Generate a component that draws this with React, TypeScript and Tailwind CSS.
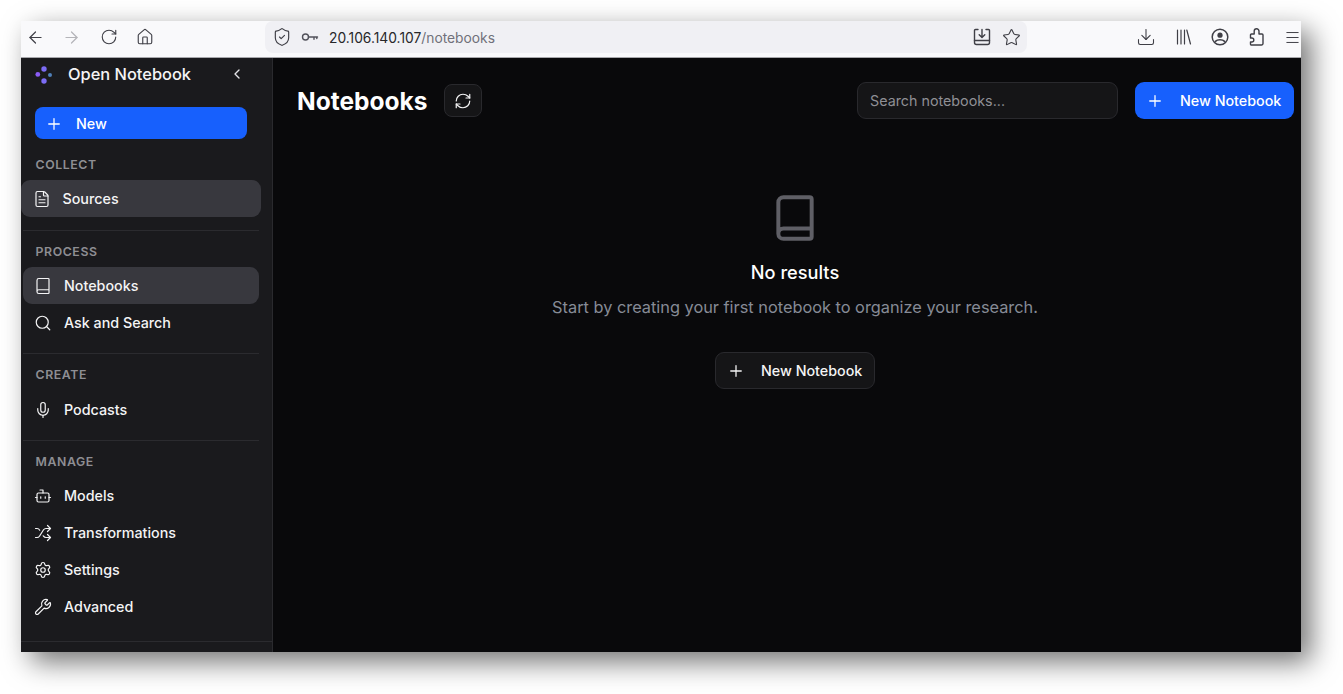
import React from 'react';
import {
  ArrowLeft,
  ArrowRight,
  Book,
  Bot,
  ChevronLeft,
  Download,
  FileText,
  House,
  Menu,
  Mic,
  Plus,
  RefreshCw,
  RotateCw,
  Search,
  Settings,
  ShieldCheck,
  Shuffle,
  Star,
  Wrench,
} from 'lucide-react';

const font = { fontFamily: 'Inter, sans-serif' };

const KeyIcon = () => (
  <svg width="18" height="18" viewBox="0 0 18 18" fill="none" stroke="#52525b" strokeWidth="1.4" strokeLinecap="round">
    <circle cx="4.5" cy="9" r="3" />
    <path d="M7.5 9h9M13 9v2.2M15.8 9v1.6" />
  </svg>
);

const SavePageIcon = () => (
  <svg width="18" height="18" viewBox="0 0 18 18" fill="none" stroke="#3f3f46" strokeWidth="1.4" strokeLinecap="round" strokeLinejoin="round">
    <path d="M5 1.5H2.5a1 1 0 0 0-1 1v12a2 2 0 0 0 2 2h11a2 2 0 0 0 2-2v-12a1 1 0 0 0-1-1H13" />
    <path d="M1.5 12.5h15M9 1.5v7.5M6.2 6.8 9 9.6l2.8-2.8" />
  </svg>
);

const LibraryIcon = () => (
  <svg width="16" height="16" viewBox="0 0 16 16" fill="none" stroke="#3f3f46" strokeWidth="1.2" strokeLinecap="round">
    <path d="M1.5 1v14M5 1v14M8.5 1v14M10.8 1l3.7 14" />
  </svg>
);

const AccountIcon = () => (
  <svg width="18" height="18" viewBox="0 0 18 18" fill="none" stroke="#3f3f46" strokeWidth="1.5" strokeLinecap="round">
    <circle cx="9" cy="9" r="7.8" />
    <circle cx="9" cy="7.2" r="2.6" fill="#3f3f46" stroke="none" />
    <path d="M4.4 13.4c1.2-1.3 2.8-1.7 4.6-1.7s3.4.4 4.6 1.7" strokeWidth="1.6" />
  </svg>
);

const ExtensionIcon = () => (
  <svg width="16" height="18" viewBox="0 0 16 18" fill="none" stroke="#3f3f46" strokeWidth="1.4" strokeLinejoin="round">
    <path d="M2.2 17h10.3a1.5 1.5 0 0 0 1.5-1.5V7a1 1 0 0 0-1-1H10V3.2a2.4 2.4 0 0 0-4.8 0V6H2.5a1 1 0 0 0-1 1v3h1.3a2 2 0 0 1 0 4H1.5v2.2a.8.8 0 0 0 .7.8z" />
  </svg>
);

const Logo = () => (
  <svg width="18" height="18" viewBox="0 0 18 18">
    <circle cx="9" cy="3" r="2.7" fill="#7c6cf5" />
    <circle cx="2.8" cy="8.4" r="2.4" fill="#8b5cf6" />
    <circle cx="15" cy="9" r="2" fill="#4f7fb8" />
    <circle cx="9" cy="15" r="2.7" fill="#7c6cf5" />
  </svg>
);

const SectionLabel = ({ children }: { children: React.ReactNode }) => (
  <div className="flex h-[16px] items-center pt-[2px] pl-[14.5px] text-[12.3px] leading-none font-semibold tracking-[0.6px] text-[#8e8e93]">
    {children}
  </div>
);

const NavItem = ({
  icon: Icon,
  label,
  active,
}: {
  icon: React.ElementType;
  label: string;
  active?: boolean;
}) => (
  <div
    className={`mx-[2px] flex h-[37px] items-center gap-[12px] rounded-[9px] pl-[11px] text-[14.3px] font-medium text-[#f4f4f5] ${
      active ? 'bg-[#38383e]' : ''
    }`}
  >
    <Icon size={18} strokeWidth={1.6} className="shrink-0" />
    {label}
  </div>
);

const Divider = () => <div className="mx-[2px] h-px bg-[#2b2b2f]" />;

export default function App() {
  return (
    <div className="h-[694px] w-[1343px] overflow-hidden bg-white pt-[21px] pl-[21px]" style={font}>
      <div className="flex h-[631px] w-[1280px] flex-col shadow-[10px_10px_26px_rgba(0,0,0,0.55)]">
        {/* browser toolbar */}
        <div className="flex h-[37px] shrink-0 items-center border-b border-[#a8a8ac] bg-[#f9f9fb] pb-[4px]">
          <div className="flex w-[244px] items-center gap-[17px] pl-[5px] text-[#3f3f46]">
            <ArrowLeft size={19} strokeWidth={1.5} />
            <ArrowRight size={19} strokeWidth={1.5} className="text-[#b4b4b8]" />
            <RotateCw size={18} strokeWidth={1.5} className="ml-[2px]" />
            <House size={18} strokeWidth={1.5} className="ml-[1px]" />
          </div>
          <div className="flex h-[32px] w-[762px] items-center rounded-[8px] bg-[#f0f0f4] pl-[7px]">
            <ShieldCheck size={20} strokeWidth={1.4} className="text-[#3f3f46]" />
            <div className="ml-[9px]">
              <KeyIcon />
            </div>
            <span className="ml-[10px] pt-[2px] text-[13.8px] text-[#27272a]">
              20.106.140.107<span className="text-[#71717a]">/notebooks</span>
            </span>
            <div className="ml-auto flex items-center gap-[11px] pr-[6px]">
              <SavePageIcon />
              <Star size={19} strokeWidth={1.4} className="text-[#3f3f46]" />
            </div>
          </div>
          <div className="flex flex-1 items-center justify-between pl-[109px] text-[#3f3f46]">
            <Download size={20} strokeWidth={1.3} />
            <LibraryIcon />
            <AccountIcon />
            <ExtensionIcon />
            <Menu size={17} strokeWidth={1.4} />
          </div>
        </div>

        <div className="flex min-h-0 flex-1">
          {/* sidebar */}
          <aside className="flex w-[252px] shrink-0 flex-col border-r border-[#2a2a2e] bg-[#1a1a1d]">
            <div className="flex h-[34px] items-center pr-[27px] pl-[14px]">
              <Logo />
              <span className="ml-[15px] pb-[2px] text-[16.4px] font-medium text-[#f4f4f5]">Open Notebook</span>
              <ChevronLeft size={16} strokeWidth={2} className="mb-[2px] ml-auto text-[#e4e4e7]" />
            </div>
            <div className="mt-[15px] mr-[25px] ml-[14px] flex h-[32px] items-center gap-[13px] rounded-[8px] bg-[#1760fd] pt-[1px] pl-[10px] text-[14.3px] font-medium text-white">
              <Plus size={18} strokeWidth={1.7} />
              New
            </div>

            <div className="mt-[17px]">
              <SectionLabel>COLLECT</SectionLabel>
            </div>
            <div className="mt-[8px] mr-[11px] flex h-[37px] items-center rounded-[9px] bg-[#38383e] pl-[12px] text-[14.3px] font-medium text-[#f4f4f5]">
              <FileText size={18} strokeWidth={1.6} className="shrink-0" />
              <span className="ml-[11.5px] pt-[1px]">Sources</span>
            </div>
            <div className="mt-[13px] mr-[11px]">
              <Divider />
            </div>

            <div className="mt-[12px]">
              <SectionLabel>PROCESS</SectionLabel>
            </div>
            <div className="mt-[8px] mr-[11px]">
              <NavItem icon={Book} label="Notebooks" active />
              <NavItem icon={Search} label="Ask and Search" />
            </div>
            <div className="mt-[12px] mr-[11px]">
              <Divider />
            </div>

            <div className="mt-[12px]">
              <SectionLabel>CREATE</SectionLabel>
            </div>
            <div className="mt-[9px] mr-[11px]">
              <NavItem icon={Mic} label="Podcasts" />
            </div>
            <div className="mt-[12px] mr-[11px]">
              <Divider />
            </div>

            <div className="mt-[12px]">
              <SectionLabel>MANAGE</SectionLabel>
            </div>
            <div className="mt-[8px] mr-[11px]">
              <NavItem icon={Bot} label="Models" />
              <NavItem icon={Shuffle} label="Transformations" />
              <NavItem icon={Settings} label="Settings" />
              <NavItem icon={Wrench} label="Advanced" />
            </div>
            <div className="mt-[16px] h-px bg-[#2b2b2f]" />
          </aside>

          {/* main */}
          <main className="flex min-w-0 flex-1 flex-col bg-[#09090b]">
            <div className="flex items-center pt-[24px] pr-[7px] pl-[24px]">
              <h1 className="h-[37px] pt-[1px] text-[24.5px] leading-[37px] font-bold text-white">Notebooks</h1>
              <div className="ml-[17px] flex h-[33px] w-[38px] items-center justify-center rounded-[8px] border border-[#29292d] bg-[#151517] text-[#f4f4f5]">
                <RefreshCw size={18} strokeWidth={1.6} />
              </div>
              <div className="ml-auto flex h-[37px] w-[261px] items-center rounded-[9px] border border-[#29292d] bg-[#151517] pl-[12px] text-[14.3px] text-[#8f8f95]">
                Search notebooks...
              </div>
              <div className="ml-[17px] flex h-[37px] w-[159px] items-center gap-[16px] rounded-[9px] bg-[#1760fd] pl-[11px] text-[14.3px] font-medium text-white">
                <Plus size={18} strokeWidth={1.7} />
                New Notebook
              </div>
            </div>

            <div className="flex flex-col items-center pt-[74px] pl-[16px]">
              <Book size={50} strokeWidth={1.9} className="text-[#5f5f66]" />
              <div className="mt-[15px] text-[18.2px] leading-[28px] font-medium text-white">No results</div>
              <div className="mt-[9px] text-[16.33px] leading-[24px] text-[#868b96]">
                Start by creating your first notebook to organize your research.
              </div>
              <div className="mt-[33px] flex h-[37px] w-[160px] items-center gap-[16px] rounded-[9px] border border-[#29292d] bg-[#151517] pl-[11px] text-[14.3px] font-medium text-[#f4f4f5]">
                <Plus size={18} strokeWidth={1.7} />
                New Notebook
              </div>
            </div>
          </main>
        </div>
      </div>
    </div>
  );
}
